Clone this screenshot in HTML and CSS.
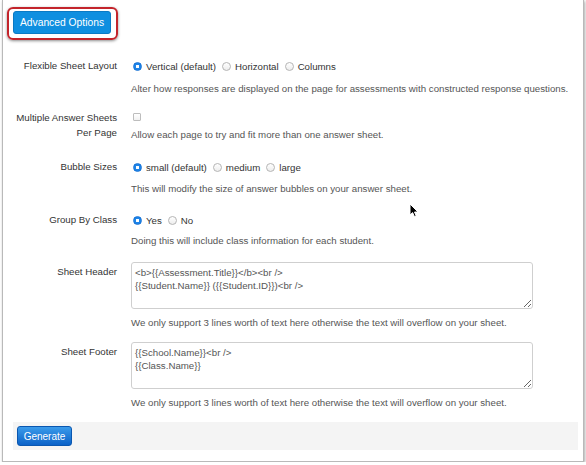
FILE: index.html
```html
<!DOCTYPE html>
<html>
<head>
<meta charset="utf-8">
<link rel="stylesheet" href="styles.css">
</head>
<body>
<div class="window">
  <div class="toolbar">
    <span class="highlight"><button class="btn-adv" type="button">Advanced Options</button></span>
  </div>
  <form class="form">
    <div class="row r1">
      <label class="lbl">Flexible Sheet Layout</label>
      <div class="ctl">
        <div class="opts">
          <label class="opt"><input class="radio" type="radio" name="layout" checked>Vertical (default)</label>
          <label class="opt"><input class="radio" type="radio" name="layout">Horizontal</label>
          <label class="opt"><input class="radio" type="radio" name="layout">Columns</label>
        </div>
        <p class="help h1">Alter how responses are displayed on the page for assessments with constructed response questions.</p>
      </div>
    </div>
    <div class="row r2">
      <label class="lbl lbl-two">Multiple Answer Sheets<br>Per Page</label>
      <div class="ctl">
        <div class="opts"><input class="check" type="checkbox"></div>
        <p class="help h2">Allow each page to try and fit more than one answer sheet.</p>
      </div>
    </div>
    <div class="row r3">
      <label class="lbl">Bubble Sizes</label>
      <div class="ctl">
        <div class="opts">
          <label class="opt"><input class="radio" type="radio" name="bubble" checked>small (default)</label>
          <label class="opt"><input class="radio" type="radio" name="bubble">medium</label>
          <label class="opt"><input class="radio" type="radio" name="bubble">large</label>
        </div>
        <p class="help h3">This will modify the size of answer bubbles on your answer sheet.</p>
      </div>
    </div>
    <div class="row r4">
      <label class="lbl">Group By Class</label>
      <div class="ctl">
        <div class="opts">
          <label class="opt"><input class="radio" type="radio" name="group" checked>Yes</label>
          <label class="opt"><input class="radio" type="radio" name="group">No</label>
        </div>
        <p class="help h4">Doing this will include class information for each student.</p>
      </div>
    </div>
    <div class="row r5">
      <label class="lbl lbl-ta">Sheet Header</label>
      <div class="ctl">
        <textarea class="ta">&lt;b&gt;{{Assessment.Title}}&lt;/b&gt;&lt;br /&gt;
{{Student.Name}} ({{Student.ID}})&lt;br /&gt;</textarea>
        <p class="help h5">We only support 3 lines worth of text here otherwise the text will overflow on your sheet.</p>
      </div>
    </div>
    <div class="row r6">
      <label class="lbl lbl-ta">Sheet Footer</label>
      <div class="ctl">
        <textarea class="ta">{{School.Name}}&lt;br /&gt;
{{Class.Name}}</textarea>
        <p class="help h5">We only support 3 lines worth of text here otherwise the text will overflow on your sheet.</p>
      </div>
    </div>
  </form>
  <div class="actions"><button class="btn-gen" type="button">Generate</button></div>
  <svg class="cursor" width="11" height="15" viewBox="0 0 11 15"><path d="M1 1 L1 12 L3.6 9.6 L5.4 13.6 L7.2 12.8 L5.5 9 L9 9 Z" fill="#000" stroke="#fff" stroke-width="1" stroke-linejoin="round"/></svg>
</div>
</body>
</html>
```
FILE: styles.css
```css
* { box-sizing: border-box; }
html, body { margin: 0; padding: 0; background: #fff; }
body {
  font-family: "Liberation Sans", Arial, Helvetica, sans-serif;
  font-size: 9.7px;
  color: #333;
}
.window {
  position: relative;
  width: 582px;
  height: 462px;
  margin-left: 2px;
  border: 1px solid #b9b9b9;
  border-top: none;
  box-shadow: 1px 1px 3px rgba(0,0,0,0.35);
  background: #fff;
}
.toolbar {
  padding-top: 7px;
  padding-left: 4px;
  height: 40px;
}
.highlight {
  display: inline-block;
  border: 2px solid #c3242b;
  border-radius: 6px;
  padding: 2px 5px 4px 4px;
  box-shadow: 0 1px 3px rgba(0,0,0,0.45);
}
.btn-adv {
  display: block;
  height: 23px;
  width: 98px;
  padding: 0;
  border: 1px solid #0b7ac4;
  border-radius: 3px;
  background: #0f8fe0;
  color: #fff;
  font-family: "Liberation Sans", Arial, sans-serif;
  font-size: 10.3px;
}
.form { margin-top: 19px; }
.row {
  display: grid;
  grid-template-columns: 114px 402px;
  column-gap: 14px;
  align-items: start;
}
.lbl {
  text-align: right;
  line-height: 14px;
  color: #333;
}
.lbl-two { line-height: 15px; }
.lbl-ta { padding-top: 3px; }
.r2 { margin-top: 14px; }
.r3 { margin-top: 18px; }
.r4 { margin-top: 17px; }
.r5 { margin-top: 14px; }
.r6 { margin-top: 12px; }
.opts {
  display: flex;
  align-items: center;
  height: 14px;
  white-space: nowrap;
}
.opt {
  display: inline-flex;
  align-items: center;
  margin-right: 4px;
  color: #333;
}
.radio {
  -webkit-appearance: none;
  appearance: none;
  width: 9px;
  height: 9px;
  margin: 0 4px 0 2px;
  border-radius: 50%;
  border: 1px solid #b5b5b5;
  background: linear-gradient(#ffffff, #ededed);
}
.radio:checked {
  border-color: #1773d6;
  background: radial-gradient(circle, #fff 0, #fff 1.4px, #1d84e8 2px);
}
.check {
  -webkit-appearance: none;
  appearance: none;
  width: 8px;
  height: 8px;
  margin: 0 0 0 2px;
  border: 1px solid #bdbdbd;
  border-radius: 1px;
  background: linear-gradient(#fff, #f1f1f1);
}
.help {
  margin: 8px 0 0 0;
  line-height: 14px;
  color: #555;
  white-space: nowrap;
}
.h1 { margin-top: 9px; }
.h2 { margin-top: 4px; }
.h4, .h5 { margin-top: 7px; }
.ta {
  display: block;
  width: 402px;
  height: 47px;
  margin: 0;
  padding: 3px 3px;
  border: 1px solid #cfcfcf;
  border-radius: 3px;
  font-family: "Liberation Sans", Arial, sans-serif;
  font-size: 9.7px;
  line-height: 13px;
  color: #555;
  resize: vertical;
  overflow: hidden;
}
.actions {
  margin: 12px 5px 0 10px;
  height: 28px;
  padding: 4px 4px;
  background: #f4f4f4;
}
.btn-gen {
  display: block;
  height: 20px;
  width: 55px;
  padding: 0;
  border: 1px solid #0a57b0;
  border-radius: 3px;
  background: linear-gradient(#3b9bea, #0b62c8);
  color: #fff;
  font-family: "Liberation Sans", Arial, sans-serif;
  font-size: 10px;
}
.cursor {
  position: absolute;
  left: 406px;
  top: 203px;
}
```
